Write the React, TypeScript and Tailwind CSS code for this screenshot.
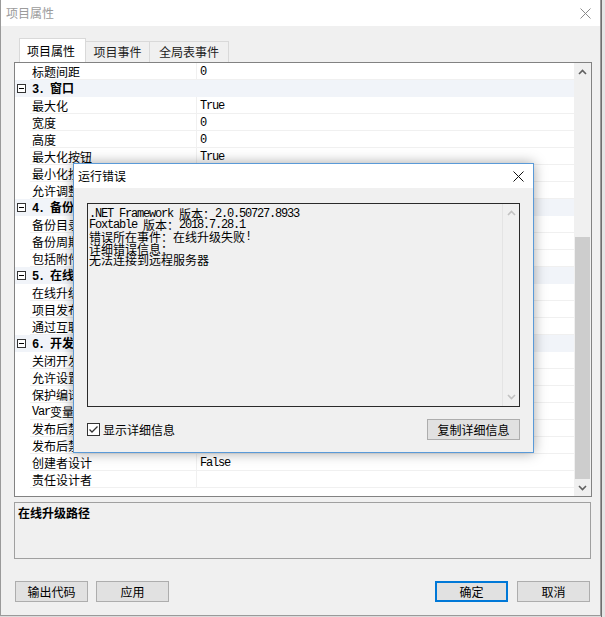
import React from 'react';

type Row = { cat?: boolean; name: string; value?: string };

const rows: Row[] = [
  { name: '标题间距', value: '0' },
  { cat: true, name: '3. 窗口' },
  { name: '最大化', value: 'True' },
  { name: '宽度', value: '0' },
  { name: '高度', value: '0' },
  { name: '最大化按钮', value: 'True' },
  { name: '最小化按钮', value: 'True' },
  { name: '允许调整大小', value: 'True' },
  { cat: true, name: '4. 备份' },
  { name: '备份目录', value: '' },
  { name: '备份周期', value: '0' },
  { name: '包括附件', value: 'False' },
  { cat: true, name: '5. 在线升级' },
  { name: '在线升级路径', value: '' },
  { name: '项目发布路径', value: '' },
  { name: '通过互联网升级', value: 'False' },
  { cat: true, name: '6. 开发' },
  { name: '关闭开发者模式', value: 'False' },
  { name: '允许设置权限', value: 'False' },
  { name: '保护编译', value: 'False' },
  { name: 'Var变量', value: '' },
  { name: '发布后禁止设计', value: 'False' },
  { name: '发布后禁止编辑', value: 'False' },
  { name: '创建者设计', value: 'False' },
  { name: '责任设计者', value: '' },
];

const errorLines = [
  '.NET Framework 版本：2.0.50727.8933',
  'Foxtable 版本：2018.7.28.1',
  '错误所在事件：在线升级失败!',
  '详细错误信息：',
  '无法连接到远程服务器',
];

// ascii runs in a narrow mono face, like SimSun half-width glyphs
const Mono: React.FC<{ text: string }> = ({ text }) => {
  const parts = text.split(/([\x20-\x7e]+)/).filter(Boolean);
  return (
    <>
      {parts.map((p, i) =>
        /^[\x20-\x7e]+$/.test(p) ? (
          <span key={i} className="font-['Liberation_Mono',monospace] tracking-[-1.2px] whitespace-pre leading-none">
            {p}
          </span>
        ) : (
          <span key={i} className="leading-none">{p}</span>
        )
      )}
    </>
  );
};

const Chevron: React.FC<{ down?: boolean; color?: string }> = ({ down, color = '#606060' }) => (
  <svg width="9" height="6" viewBox="0 0 9 6">
    <polyline
      points={down ? '1,1 4.5,4.5 8,1' : '1,5 4.5,1.5 8,5'}
      fill="none"
      stroke={color}
      strokeWidth="1.6"
    />
  </svg>
);

const CloseX: React.FC<{ color: string; size?: number }> = ({ color, size = 11 }) => (
  <svg width={size} height={size} viewBox="0 0 11 11">
    <line x1="0.5" y1="0.5" x2="10.5" y2="10.5" stroke={color} strokeWidth="1" />
    <line x1="10.5" y1="0.5" x2="0.5" y2="10.5" stroke={color} strokeWidth="1" />
  </svg>
);

const MinusBox = () => (
  <div className="w-[9px] h-[9px] border border-[#333] bg-white flex items-center justify-center">
    <div className="w-[5px] h-px bg-[#000]" />
  </div>
);

const Button: React.FC<{ label: string; w: string; focus?: boolean }> = ({ label, w, focus }) => (
  <div
    className={`${w} h-[21px] flex items-center justify-center bg-[#e1e1e1] text-[12px] leading-none ${
      focus ? 'border-2 border-[#0078d7]' : 'border border-[#adadad]'
    }`}
  >
    {label}
  </div>
);

const PropertyGrid = () => (
  <div className="ml-[13px] w-[578px] h-[435px] border border-[#828282] bg-white flex">
    <div className="flex-1 flex flex-col">
      {rows.map((r, i) =>
        r.cat ? (
          <div key={i} className="h-[17px] flex items-center bg-[#f1f4f9]">
            <div className="w-[15px] pl-[2px]">
              <MinusBox />
            </div>
            <span className="pl-[2px] font-bold leading-none">
              <Mono text={r.name} />
            </span>
          </div>
        ) : (
          <div key={i} className="h-[17px] flex">
            <div className="w-[15px]" />
            <div className="w-[167px] pl-[2px] pt-px flex items-center border-b border-r border-[#f0f0f0] leading-none whitespace-nowrap overflow-hidden">
              <Mono text={r.name} />
            </div>
            <div className="flex-1 pl-[3px] pt-[2px] flex items-center border-b border-[#f0f0f0] leading-none">
              <Mono text={r.value ?? ''} />
            </div>
          </div>
        )
      )}
    </div>
    <div className="w-[17px] bg-[#f0f0f0] flex flex-col">
      <div className="h-[17px] flex items-center justify-center">
        <Chevron />
      </div>
      <div className="h-[157px]" />
      <div className="h-[242px] mx-px bg-[#cdcdcd]" />
      <div className="flex-1" />
      <div className="h-[17px] flex items-center justify-center">
        <Chevron down />
      </div>
    </div>
  </div>
);

const ErrorDialog = () => (
  <div className="absolute left-[72px] top-[163px] w-[461px] h-[290px] border border-[#5a9ad8] bg-[#f0f0f0] shadow-[0_0_12px_rgba(0,0,0,0.35)] flex flex-col">
    <div className="h-[24px] bg-white flex items-center justify-between pl-[4px] pr-[9px]">
      <span className="text-[12px] leading-none">运行错误</span>
      <CloseX color="#111" size={11} />
    </div>
    <div className="px-[13px] pt-[15px] flex flex-col">
      <div className="h-[204px] border border-[#2a2a2a] flex">
        <div className="flex-1 pl-[1px] pt-[4px] text-[12px] leading-none">
          {errorLines.map((l, i) => (
            <div key={i} className="h-[11.6px] flex items-center whitespace-pre">
              <Mono text={l} />
            </div>
          ))}
        </div>
        <div className="w-[17px] border-l border-[#e4e4e4] flex flex-col justify-between py-[6px] items-center">
          <Chevron color="#c2c2c2" />
          <Chevron down color="#c2c2c2" />
        </div>
      </div>
      <div className="mt-[12px] h-[21px] flex items-center justify-between">
        <div className="flex items-center gap-[3px]">
          <div className="w-[13px] h-[13px] border border-[#333] bg-white flex items-center justify-center">
            <svg width="11" height="9" viewBox="0 0 11 9">
              <polyline points="1.5,4.5 4,7 9.5,1.5" fill="none" stroke="#333" strokeWidth="1.3" />
            </svg>
          </div>
          <span className="text-[12px] leading-none">显示详细信息</span>
        </div>
        <Button label="复制详细信息" w="w-[93px]" />
      </div>
    </div>
  </div>
);

export default function App() {
  return (
    <div className="w-[605px] h-[617px] flex bg-[#dcdcdc] overflow-hidden font-['Noto_Sans_CJK_SC','Liberation_Sans',sans-serif] text-[12px] text-black">
      <div className="relative w-[601px] h-[616px] bg-[#f0f0f0] border-l border-r border-b border-[#9a9a9a] flex flex-col">
        {/* title bar */}
        <div className="h-[26px] bg-white flex items-center justify-between pl-[5px] pr-[9px] shrink-0">
          <span className="text-[12px] leading-none text-[#9b9b9b]">项目属性</span>
          <CloseX color="#8a8a8a" size={11} />
        </div>

        {/* tabs */}
        <div className="mt-[13px] h-[23px] flex items-end pl-[18px] shrink-0">
          <div className="w-[67px] h-[24px] bg-white border border-b-0 border-[#d9d9d9] flex items-center pl-[7px] leading-none">
            项目属性
          </div>
          <div className="w-[64px] h-[21px] bg-[#f0f0f0] border border-l-0 border-b-0 border-[#d9d9d9] flex items-center justify-center leading-none text-[#222]">
            项目事件
          </div>
          <div className="w-[79px] h-[21px] bg-[#f0f0f0] border border-l-0 border-b-0 border-[#d9d9d9] flex items-center justify-center leading-none text-[#222]">
            全局表事件
          </div>
        </div>

        <PropertyGrid />

        {/* description */}
        <div className="mt-[5px] ml-[13px] w-[577px] h-[57px] border border-[#a0a0a0] pl-[3px] pt-[4px] leading-none shrink-0">
          <span className="font-bold leading-none">在线升级路径</span>
        </div>

        {/* buttons */}
        <div className="mt-[22px] ml-[14px] mr-[10px] flex items-center">
          <Button label="输出代码" w="w-[73px]" />
          <div className="ml-[8px]">
            <Button label="应用" w="w-[73px]" />
          </div>
          <div className="flex-1" />
          <Button label="确定" w="w-[73px]" focus />
          <div className="ml-[9px]">
            <Button label="取消" w="w-[73px]" />
          </div>
        </div>

        <ErrorDialog />
      </div>
      <div className="w-[4px] h-full border-l border-[#6e6e6e] bg-[#e4e4e4]" />
    </div>
  );
}
